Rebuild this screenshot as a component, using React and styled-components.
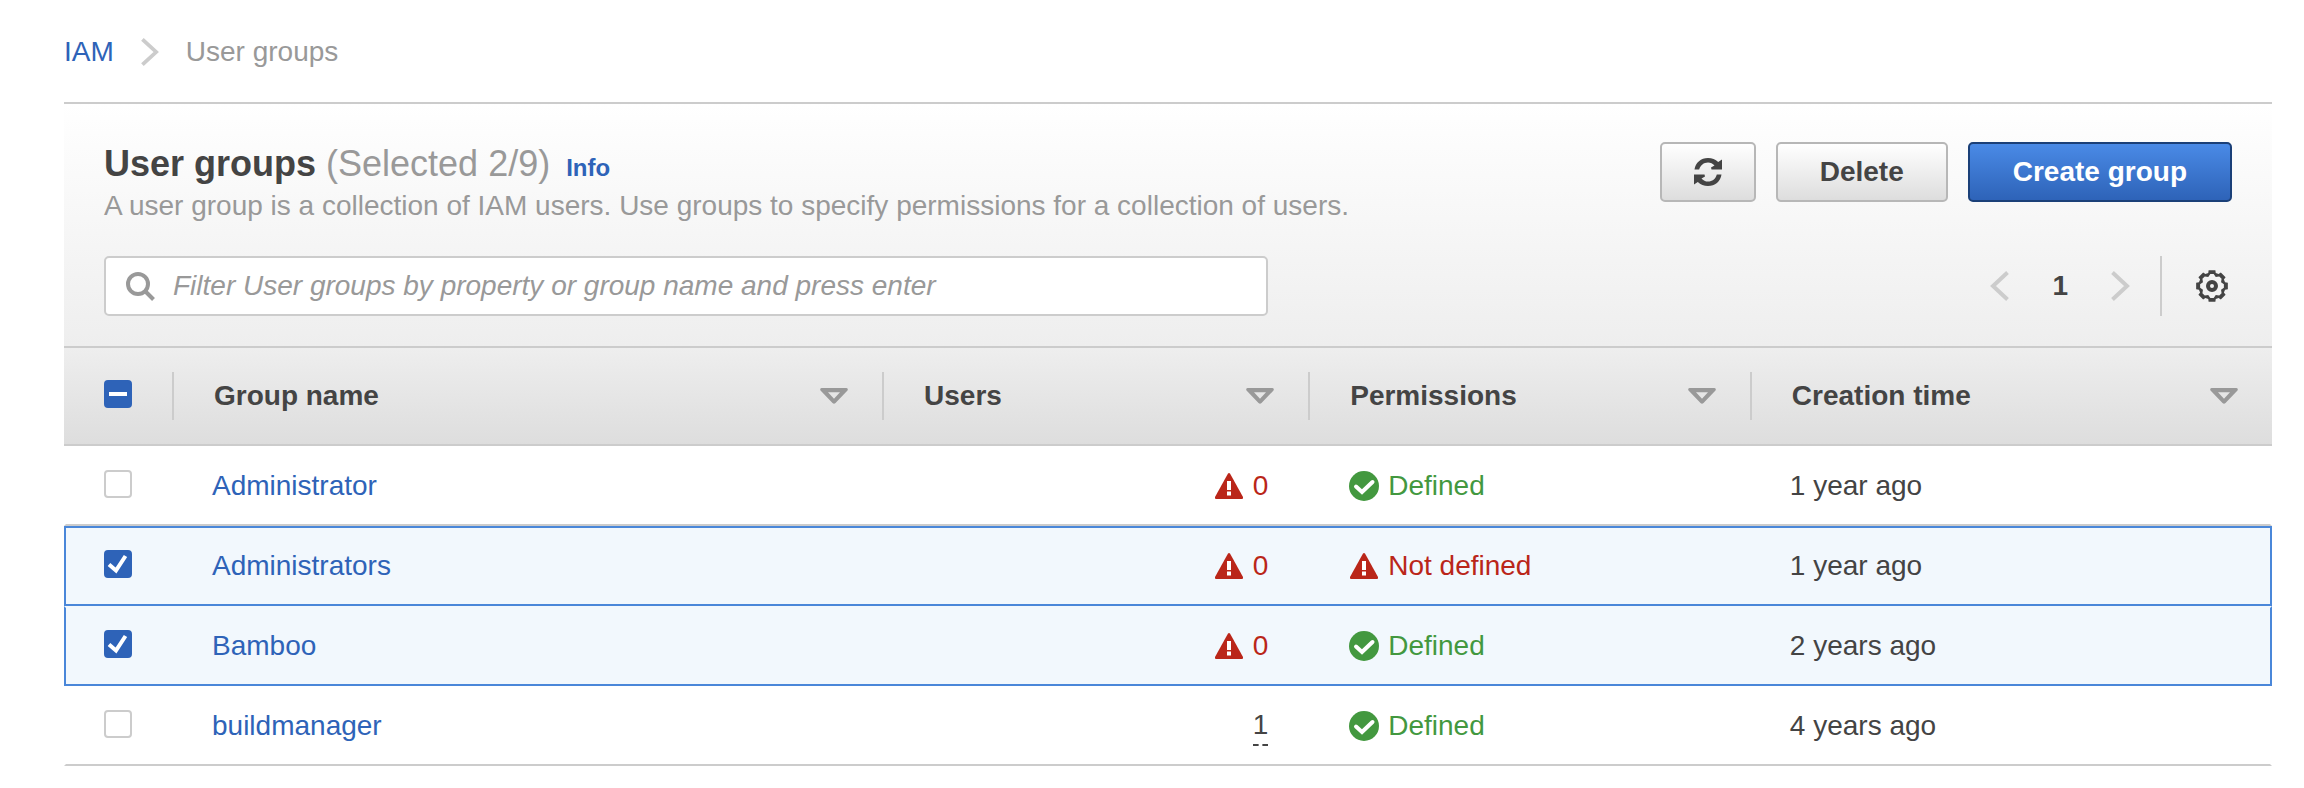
import React from "react";
import styled, { createGlobalStyle, css } from "styled-components";

const colors = {
  text: "#444",
  muted: "#999",
  line: "#ccc",
  link: "#2e63b8",
  accent: "#4a87d9",
  selected: "#f2f8fd",
  error: "#ba2619",
  success: "#43983f",
};

const GlobalStyle = createGlobalStyle`
  *, *::before, *::after { box-sizing: border-box; }
  body {
    margin: 0;
    background: #fff;
    color: ${colors.text};
    font: 28px/40px "Liberation Sans", Arial, sans-serif;
  }
  button, input { font: inherit; color: inherit; margin: 0; }
  svg { display: block; flex: none; }
`;

const Page = styled.div`
  padding: 32px 32px 22px 64px;
`;

const Breadcrumbs = styled.nav`
  display: flex;
  align-items: center;
  gap: 27px;
  margin-bottom: 30px;
  color: ${colors.muted};
`;

const Link = styled.a`
  color: ${colors.link};
  text-decoration: none;
`;

const Panel = styled.main`
  border-top: 2px solid ${colors.line};
`;

const PanelHeader = styled.header`
  padding: 38px 40px 30px;
  background: linear-gradient(#fff, #eee);
  border-bottom: 2px solid ${colors.line};
`;

const Bar = styled.div`
  display: flex;
  justify-content: space-between;
  align-items: flex-start;
`;

const Title = styled.h1`
  margin: 0;
  font-size: 36px;
  line-height: 44px;
`;

const Count = styled.span`
  font-weight: 400;
  color: ${colors.muted};
`;

const InfoLink = styled(Link)`
  margin-left: 16px;
  font-size: 24px;
  line-height: 24px;
`;

const Description = styled.p`
  margin: 0 0 30px;
  color: ${colors.muted};
`;

const Actions = styled.div`
  display: flex;
  gap: 20px;
`;

const Button = styled.button`
  display: flex;
  align-items: center;
  justify-content: center;
  height: 60px;
  padding: 0 ${(p) => (p.$icon ? 32 : 42)}px;
  border: 2px solid #b7b7b7;
  border-radius: 5px;
  background: linear-gradient(#fff, #ddd);
  font-weight: 700;
  ${(p) =>
    p.$primary &&
    css`
      padding: 0 43px;
      border-color: #1b4078;
      background: linear-gradient(#4a8ae6, #2e63b8);
      color: #fff;
    `}
`;

const SearchField = styled.label`
  display: flex;
  align-items: center;
  gap: 17px;
  flex: 0 1 1164px;
  height: 60px;
  padding: 0 18px;
  border: 2px solid ${colors.line};
  border-radius: 5px;
  background: #fff;
`;

const SearchInput = styled.input`
  flex: 1;
  min-width: 0;
  padding: 0;
  border: 0;
  outline: 0;
  background: none;
  &::placeholder {
    color: ${colors.muted};
    font-style: italic;
    opacity: 1;
  }
`;

const Tools = styled.div`
  display: flex;
  align-items: center;
  height: 60px;
`;

const PlainButton = styled.button`
  display: block;
  padding: 0;
  border: 0;
  background: none;
`;

const Pager = styled.nav`
  display: flex;
  align-items: center;
  height: 60px;
  gap: 43px;
  padding-right: 30px;
  margin-right: 34px;
  border-right: 2px solid ${colors.line};
  font-weight: 700;
`;

const Gear = styled(PlainButton)`
  margin-right: 4px;
`;

const Table = styled.table`
  width: 100%;
  table-layout: fixed;
  border-collapse: separate;
  border-spacing: 0;
`;

const Column = styled.col`
  width: ${(p) => p.$width};
`;

const HeadRow = styled.tr`
  height: 98px;
  background: linear-gradient(#eee, #ddd);
`;

const HeadCell = styled.th`
  padding: 0;
  border-bottom: 2px solid ${colors.line};
  text-align: left;
`;

const HeadContent = styled.div`
  display: flex;
  align-items: center;
  justify-content: space-between;
  height: 48px;
  padding: 0 34px 0 40px;
  border-right: ${(p) => (p.$last ? "0" : `2px solid ${colors.line}`)};
`;

const Cell = styled.td`
  height: 80px;
  padding: 0 38px;
  border: solid transparent;
  border-width: 2px 0;
  border-bottom-color: ${colors.line};
  &:first-child { border-left-width: 2px; }
  &:last-child { border-right-width: 2px; }
`;

const Row = styled.tr`
  ${(p) =>
    p.$selected &&
    css`
      background: ${colors.selected};
      ${Cell} {
        border-color: ${p.$joined ? "transparent" : colors.accent} ${colors.accent} ${colors.accent};
      }
    `}
`;

const UsersCell = styled(Cell)`
  padding-right: 42px;
`;

const Status = styled.span`
  display: flex;
  align-items: center;
  justify-content: ${(p) => (p.$end ? "flex-end" : "flex-start")};
  gap: 8px;
  color: ${(p) => colors[p.$tone]};
`;

const UserCount = styled(PlainButton)`
  margin-left: auto;
  line-height: 38px;
  border-bottom: 2px dashed ${colors.text};
`;

const CheckWrap = styled.span`
  display: grid;
  width: 28px;
  margin-bottom: 4px;
  > * { grid-area: 1 / 1; }
  > svg { pointer-events: none; z-index: 1; }
`;

const CheckInput = styled.input`
  appearance: none;
  width: 28px;
  height: 28px;
  border: 2px solid ${(p) => (p.$filled ? colors.link : colors.line)};
  border-radius: 4px;
  background: ${(p) => (p.$filled ? colors.link : "#fff")};
`;

function Checkbox({ state, label }) {
  return (
    <CheckWrap>
      <CheckInput
        type="checkbox"
        aria-label={label}
        defaultChecked={state === "on"}
        $filled={state !== "off"}
        ref={(el) => {
          if (el) el.indeterminate = state === "mixed";
        }}
      />
      {state === "on" && (
        <svg width="28" height="28" fill="none" stroke="#fff" strokeWidth="4" aria-hidden="true">
          <path d="M5 14.5l7 6L21.5 6" />
        </svg>
      )}
      {state === "mixed" && (
        <svg width="28" height="28" aria-hidden="true">
          <rect x="5" y="12" width="18" height="4" fill="#fff" />
        </svg>
      )}
    </CheckWrap>
  );
}

const Chevron = ({ left, width = 19, height = 30 }) => (
  <svg width={width} height={height} viewBox="0 0 19 30" preserveAspectRatio="none" fill="none" stroke={colors.line} strokeWidth="4" aria-hidden="true">
    <path d={left ? "M17.5 1.5L3 15l14.5 13.5" : "M1.5 1.5L16 15 1.5 28.5"} />
  </svg>
);

const refreshArrow =
  "M.5 11.500C1.500 4.500 7 0 14 0C18 0 21.500 1.500 24.200 4L28 1.500V11.500H17.500L17 9.500L20.500 7.500C18.800 5.500 16.500 4.400 14 4.400C9.800 4.400 6.300 7.200 5.200 11.500Z";

const RefreshIcon = () => (
  <svg width="28" height="28" viewBox="0 0 28 28" fill={colors.text} aria-hidden="true">
    <path d={refreshArrow} />
    <path d={refreshArrow} transform="rotate(180 14 14)" />
  </svg>
);

const SearchIcon = () => (
  <svg width="32" height="32" viewBox="0 0 32 32" fill="none" stroke={colors.muted} strokeWidth="4" aria-hidden="true">
    <circle cx="14" cy="14" r="10" />
    <path d="M21 21l8.500 8.500" />
  </svg>
);

const polar = (radius, degrees) => {
  const a = (degrees * Math.PI) / 180;
  return `${(16 + radius * Math.cos(a)).toFixed(2)} ${(16 + radius * Math.sin(a)).toFixed(2)}`;
};

const teeth = [0, 45, 90, 135, 180, 225, 270, 315];
const gearRim = `M${teeth
  .flatMap((t) => [polar(13.6, t - 16), polar(16.2, t - 12), polar(16.2, t + 12), polar(13.6, t + 16)])
  .join("L")}Z`;
const gearHole = `M${teeth
  .flatMap((t) => [polar(12, t - 8), polar(12, t + 8), polar(9.8, t + 22.5)])
  .join("L")}Z`;

const GearIcon = () => (
  <svg width="32" height="32" viewBox="0 0 32 32" aria-hidden="true">
    <path fill={colors.text} fillRule="evenodd" d={gearRim + gearHole} />
    <circle cx="16" cy="16" r="4" fill="none" stroke={colors.text} strokeWidth="4" />
  </svg>
);

const CaretIcon = () => (
  <svg width="28" height="16" viewBox="0 0 28 16" fill={colors.muted} aria-hidden="true">
    <path fillRule="evenodd" d="M1.500 0h25q2 .5 1 2.500L15.500 15q-1.500 1.500-3 0L.5 2.500q-1-2 1-2.500zM8 4.300L14 10.800l6-6.500z" />
  </svg>
);

const WarningIcon = () => (
  <svg width="32" height="32" viewBox="0 0 32 32" aria-hidden="true">
    <path fill={colors.error} d="M15 3.500q1-1 2 0l13 23.500q.5 2-1 2H3q-1.500 0-1-2z" />
    <path fill="#fff" d="M14 11h4v9h-4zM14 21.500h4v4h-4z" />
  </svg>
);

const SuccessIcon = () => (
  <svg width="32" height="32" viewBox="0 0 32 32" aria-hidden="true">
    <circle cx="16" cy="16" r="15" fill={colors.success} />
    <path fill="none" stroke="#fff" strokeWidth="4" strokeLinecap="round" d="M8 16.500l6 5.500L24.500 12" />
  </svg>
);

const groups = [
  { name: "Administrator", users: 0, defined: true, created: "1 year ago" },
  { name: "Administrators", users: 0, defined: false, created: "1 year ago", selected: true },
  { name: "Bamboo", users: 0, defined: true, created: "2 years ago", selected: true },
  { name: "buildmanager", users: 1, defined: true, created: "4 years ago" },
];

const headings = ["Group name", "Users", "Permissions", "Creation time"];

export default function App() {
  return (
    <>
      <GlobalStyle />
      <Page>
        <Breadcrumbs aria-label="Breadcrumb">
          <Link href="#iam">IAM</Link>
          <Chevron width={18} height={28} />
          <span>User groups</span>
        </Breadcrumbs>
        <Panel>
          <PanelHeader>
            <Bar>
              <div>
                <Title>
                  User groups <Count>(Selected 2/9)</Count>
                  <InfoLink href="#info">Info</InfoLink>
                </Title>
                <Description>
                  A user group is a collection of IAM users. Use groups to specify permissions for a collection of users.
                </Description>
              </div>
              <Actions>
                <Button $icon aria-label="Refresh"><RefreshIcon /></Button>
                <Button>Delete</Button>
                <Button $primary>Create group</Button>
              </Actions>
            </Bar>
            <Bar>
              <SearchField>
                <SearchIcon />
                <SearchInput
                  type="text"
                  aria-label="Filter user groups"
                  placeholder="Filter User groups by property or group name and press enter"
                />
              </SearchField>
              <Tools>
                <Pager aria-label="Pagination">
                  <PlainButton aria-label="Previous page"><Chevron left /></PlainButton>
                  <PlainButton aria-current="page">1</PlainButton>
                  <PlainButton aria-label="Next page"><Chevron /></PlainButton>
                </Pager>
                <Gear aria-label="Preferences"><GearIcon /></Gear>
              </Tools>
            </Bar>
          </PanelHeader>
          <Table>
            <colgroup>
              <Column $width="110px" />
              <Column $width="32.16%" />
              <Column $width="19.3%" />
              <Column $width="20%" />
              <Column />
            </colgroup>
            <thead>
              <HeadRow>
                <HeadCell>
                  <HeadContent><Checkbox state="mixed" label="Select all groups" /></HeadContent>
                </HeadCell>
                {headings.map((heading, i) => (
                  <HeadCell key={heading} scope="col">
                    <HeadContent $last={i === headings.length - 1}>
                      {heading}
                      <CaretIcon />
                    </HeadContent>
                  </HeadCell>
                ))}
              </HeadRow>
            </thead>
            <tbody>
              {groups.map((g, i) => (
                <Row key={g.name} $selected={g.selected} $joined={i > 0 && groups[i - 1].selected}>
                  <Cell>
                    <Checkbox state={g.selected ? "on" : "off"} label={`Select ${g.name}`} />
                  </Cell>
                  <Cell><Link href={`#${g.name}`}>{g.name}</Link></Cell>
                  <UsersCell>
                    {g.users === 0 ? (
                      <Status $tone="error" $end><WarningIcon />0</Status>
                    ) : (
                      <UserCount>{g.users}</UserCount>
                    )}
                  </UsersCell>
                  <Cell>
                    {g.defined ? (
                      <Status $tone="success"><SuccessIcon />Defined</Status>
                    ) : (
                      <Status $tone="error"><WarningIcon />Not defined</Status>
                    )}
                  </Cell>
                  <Cell>{g.created}</Cell>
                </Row>
              ))}
            </tbody>
          </Table>
        </Panel>
      </Page>
    </>
  );
}
